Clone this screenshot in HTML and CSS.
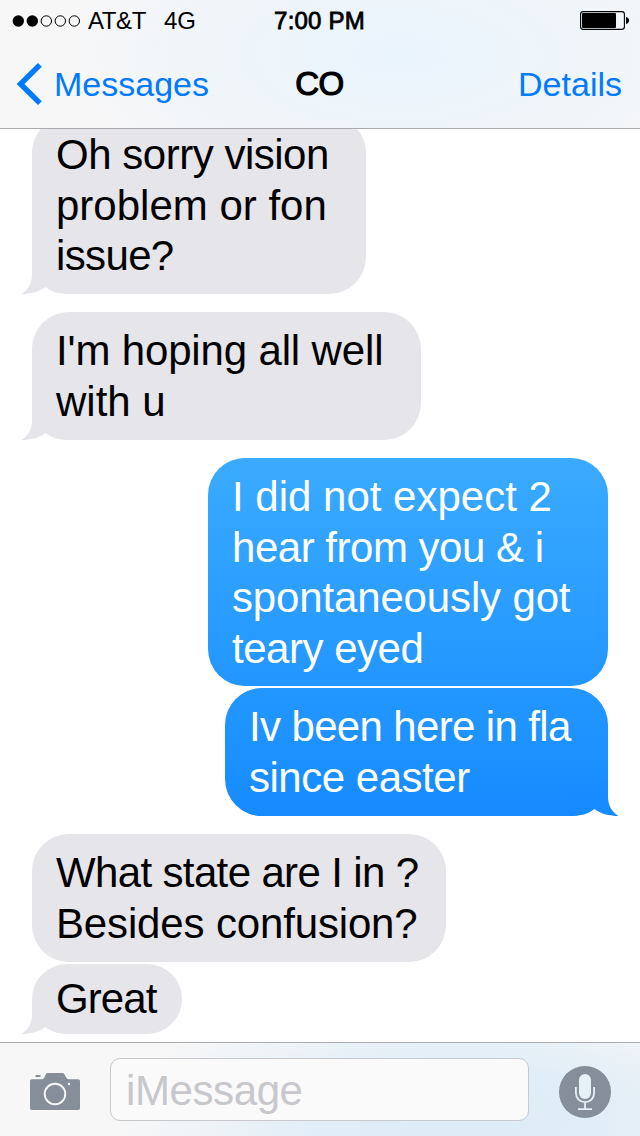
FILE: index.html
```html
<!DOCTYPE html>
<html lang="en">
<head>
<meta charset="utf-8">
<title>Messages</title>
<link rel="stylesheet" href="styles.css">
</head>
<body>
<div class="phone">
  <header class="header">
    <div class="status">
      <div class="carrier">
        <svg class="signal" width="70" height="14" viewBox="0 0 70 14">
          <circle cx="6.3" cy="7" r="5.7"/><circle cx="20.3" cy="7" r="5.7"/>
          <g fill="none" stroke="#000" stroke-width="1"><circle cx="34.3" cy="7" r="5.2"/><circle cx="48.3" cy="7" r="5.2"/><circle cx="62.3" cy="7" r="5.2"/></g>
        </svg>
        <span class="operator">AT&amp;T</span>
        <span>4G</span>
      </div>
      <span class="clock">7:00 PM</span>
      <svg class="battery" width="50" height="20" viewBox="0 0 50 20">
        <rect x="0.6" y="0.6" width="43.8" height="17.8" rx="2.6" fill="none" stroke="#000" stroke-width="1.1"/>
        <rect x="2" y="2" width="34" height="15" rx="1"/>
        <path d="M46 6c2 .4 3 1.700 3 3.500s-1 3.100-3 3.500z"/>
      </svg>
    </div>
    <nav class="nav">
      <div class="back">
        <svg width="28" height="44" viewBox="0 0 28 44"><path d="M24.900 2.800 5.500 22 24.900 41.200" fill="none" stroke="#007aff" stroke-width="5.400"/></svg>
        <span>Messages</span>
      </div>
      <h1 class="title">CO</h1>
      <span class="details">Details</span>
    </nav>
  </header>

  <main class="thread">
    <div class="bubble in vision"><span class="tight-2">Oh sorry vision</span><span>problem or fon</span><span class="tight-3">issue?</span>
      <svg class="tail" width="50" height="36" viewBox="-11 -36 50 36"><path d="M0-36V-20C0-10-4-4-10.500 0-2 0 7-2 13.500-7 20-2 27 0 38 0V-36z"/></svg></div>
    <div class="bubble in hoping"><span class="tight-1">I'm hoping all well</span><span>with u</span>
      <svg class="tail" width="50" height="36" viewBox="-11 -36 50 36"><path d="M0-36V-20C0-10-4-4-10.500 0-2 0 7-2 13.500-7 20-2 27 0 38 0V-36z"/></svg></div>
    <div class="bubble out expect"><span>I did not expect 2</span><span class="tight-2">hear from you &amp; i</span><span class="tight-1">spontaneously got</span><span class="tight-2">teary eyed</span></div>
    <div class="bubble out easter joined"><span class="tight-3">Iv been here in fla</span><span class="tight-2">since easter</span>
      <svg class="tail" width="50" height="36" viewBox="-11 -36 50 36"><defs><linearGradient id="blue" x1="0" y1="0" x2="0" y2="1"><stop stop-color="#1a8eff"/><stop offset="1" stop-color="#168bff"/></linearGradient></defs><path fill="url(#blue)" d="M0-36V-20C0-10-4-4-10.500 0-2 0 7-2 13.500-7 20-2 27 0 38 0V-36z"/></svg></div>
    <div class="bubble in state"><span class="tight-3">What state are I in ?</span><span class="tight-1">Besides confusion?</span></div>
    <div class="bubble in great joined"><span class="tight-4">Great</span>
      <svg class="tail" width="50" height="36" viewBox="-11 -36 50 36"><path d="M0-36V-20C0-10-4-4-10.500 0-2 0 7-2 13.500-7 20-2 27 0 38 0V-36z"/></svg></div>
  </main>

  <footer class="composer">
    <svg class="camera" width="50" height="38" viewBox="0 0 50 38">
      <path fill="#868e99" d="M2 6.200h9.500c1.800 0 2.300-.7 3-2L15.700 1.600C16.300.4 17 0 18 0h14c1 0 1.800.4 2.500 1.500l1.400 2.500c.8 1.500 1.500 2.200 3 2.200H48c1.300 0 2 .7 2 2V35c0 1.300-.7 2-2 2H2c-1.300 0-2-.7-2-2V8.200c0-1.300.7-2 2-2zM6.500 2h3c.7 0 1 .4 1 1v1H5.500V3c0-.6.3-1 1-1z"/>
      <circle cx="25" cy="21" r="10.300" fill="none" stroke="#f7f7f7" stroke-width="1.900"/>
      <circle cx="39" cy="11" r="1.200" fill="#f7f7f7"/>
    </svg>
    <div class="field">iMessage</div>
    <svg class="mic" width="52" height="52" viewBox="0 0 52 52">
      <circle cx="26" cy="26" r="26" fill="#868e99"/>
      <rect x="20" y="8" width="12" height="25" rx="6" fill="#e5f0f7"/>
      <path fill="none" stroke="#e5f0f7" stroke-width="1.800" d="M16.900 21v6c0 5.500 4 9.200 9.100 9.200s9.100-3.700 9.100-9.200v-6M26 36v7M19 43.200h14"/>
    </svg>
  </footer>
</div>
</body>
</html>
```

FILE: styles.css
```css
* { box-sizing: border-box; }

body {
  margin: 0;
  background: #fff;
  font-family: "Liberation Sans", Arial, sans-serif;
  color: #000;
}

svg { display: block; flex: none; }

.phone {
  width: 640px;
  height: 1136px;
  display: flex;
  flex-direction: column;
  overflow: hidden;
}

.header {
  height: 129px;
  flex: none;
  border-bottom: 1px solid #a9abae;
  background:
    radial-gradient(ellipse 330px 150px at 400px 55px, #eaf4fd 0%, rgba(236, 244, 250, .8) 50%, rgba(247, 247, 247, 0) 100%),
    #f7f7f8;
}

.status {
  height: 40px;
  display: grid;
  grid-template-columns: 1fr auto 1fr;
  align-items: center;
  padding: 0 10px 0 12px;
  font-size: 24px;
  line-height: 42px;
}

.carrier { display: flex; align-items: center; }
.signal { margin-bottom: 1px; }
.operator { margin: 0 18px 0 6px; letter-spacing: -.4px; }
.clock { padding-right: 3px; -webkit-text-stroke: .8px #000; letter-spacing: .2px; }
.battery { justify-self: end; }

.nav {
  height: 88px;
  display: grid;
  grid-template-columns: 1fr auto 1fr;
  align-items: center;
  padding: 0 18px 0 15px;
  font-size: 34px;
  line-height: 88px;
  color: #007aff;
}

.back { display: flex; align-items: center; gap: 11px; }

.title {
  margin: 0;
  padding-left: 2px;
  font-size: 33px;
  font-weight: 400;
  letter-spacing: -.6px;
  color: #000;
  -webkit-text-stroke: 1.2px #000;
}

.details { justify-self: end; }

.thread {
  height: 913px;
  flex: none;
  display: flex;
  flex-direction: column;
  padding: 0 32px;
  overflow: hidden;
}

.bubble {
  position: relative;
  flex: none;
  height: 128px;
  margin-top: 18px;
  padding: 14px 0 0 24px;
  border-radius: 37px;
  font-size: 42px;
  line-height: 50.5px;
  white-space: nowrap;
}

.bubble span { display: block; position: relative; z-index: 1; }
.bubble .tight-1 { letter-spacing: -.15px; }
.bubble .tight-2 { letter-spacing: -.48px; }
.bubble .tight-3 { letter-spacing: -.64px; }
.bubble .tight-4 { letter-spacing: -.9px; }
.joined { margin-top: 2px; }

.in { align-self: flex-start; background: #e5e5ea; }
.out { align-self: flex-end; color: #fff; }

.tail { position: absolute; left: -11px; bottom: 0; fill: #e5e5ea; }
.out .tail { left: auto; right: -11px; transform: scaleX(-1); }

.vision { width: 334px; height: 178px; margin-top: -13px; }
.hoping { width: 389px; }
.expect { width: 400px; height: 228px; background: linear-gradient(#3aabff, #2296ff); }
.easter { width: 383px; background: linear-gradient(#2397ff, #168bff); }
.state { width: 414px; }
.great { width: 150px; height: 70px; padding-top: 10px; border-radius: 35px; }

.composer {
  flex: 1;
  border-top: 1px solid #a9abae;
  display: flex;
  align-items: center;
  padding: 0 29px 0 30px;
  background:
    radial-gradient(ellipse 340px 130px at 460px 75px, #dcebf7 0%, rgba(224, 237, 247, .9) 45%, rgba(247, 247, 247, 0) 100%),
    #f7f7f7;
}

.camera { margin-top: 5px; }

.field {
  width: 419px;
  height: 63px;
  margin: 0 30px 1px;
  padding-left: 15px;
  border: 1px solid #c8c8cd;
  border-radius: 10px;
  background: #fafafa;
  color: #c7c7cc;
  font-size: 42px;
  letter-spacing: -.4px;
  line-height: 63px;
}

.mic { margin-top: 5px; }
```
